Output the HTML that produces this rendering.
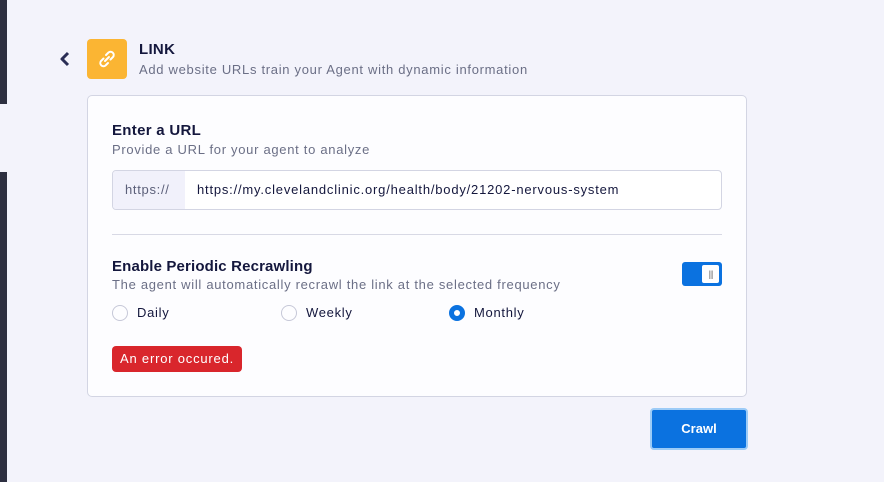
<!DOCTYPE html>
<html><head><style>
*{box-sizing:border-box;margin:0;padding:0}
body{width:884px;height:482px;background:#f3f3fb;font-family:"Liberation Sans",sans-serif;position:relative;overflow:hidden;color:#14173d}
.bar{position:absolute;left:0;width:7px;background:#2d2f40}
.abs{position:absolute}
.ls{letter-spacing:0.7px}
</style></head><body>
<div class="bar" style="top:0;height:104px"></div>
<div class="bar" style="top:172px;height:310px"></div>
<svg class="abs" style="left:59px;top:51px" width="12" height="16" viewBox="0 0 12 16"><path d="M9 2 L3 8 L9 14" stroke="#2a2d55" stroke-width="3" fill="none" stroke-linejoin="round"/></svg>
<div class="abs" style="left:87px;top:39px;width:40px;height:40px;background:#fbb533;border-radius:4px">
<svg width="40" height="40" viewBox="0 0 40 40"><g stroke="#fff" stroke-width="2" fill="none" stroke-linecap="round"><path d="M19 16 l2.5-2.5 a3.2 3.2 0 0 1 4.5 4.5 l-2.5 2.5"/><path d="M21 24 l-2.5 2.5 a3.2 3.2 0 0 1 -4.5 -4.5 l2.5 -2.5"/><path d="M18 22 l4 -4"/></g></svg></div>
<div class="abs" style="left:139px;top:41px;font-size:15px;font-weight:bold;letter-spacing:0.3px">LINK</div>
<div class="abs ls" style="left:139px;top:62px;font-size:13px;color:#6b6f86">Add website URLs train your Agent with dynamic information</div>
<div class="abs" style="left:87px;top:95px;width:660px;height:302px;background:#fdfdff;border:1px solid #d3d5e3;border-radius:5px"></div>
<div class="abs" style="left:112px;top:122px;font-size:15px;font-weight:bold;letter-spacing:0.3px">Enter a URL</div>
<div class="abs ls" style="left:112px;top:142px;font-size:13px;color:#6b6f86">Provide a URL for your agent to analyze</div>
<div class="abs" style="left:112px;top:170px;width:610px;height:40px;border:1px solid #d3d5e3;border-radius:4px;background:#fff;overflow:hidden">
<div class="abs ls" style="left:0;top:0;width:72px;height:38px;background:#f1f1fb;color:#5c607a;font-size:13px;line-height:38px;padding-left:12px">https://</div>
<div class="abs" style="left:84px;top:0;line-height:38px;font-size:13px;color:#14173d;letter-spacing:0.8px">https://my.clevelandclinic.org/health/body/21202-nervous-system</div></div>
<div class="abs" style="left:112px;top:234px;width:610px;height:1px;background:#d8d9e5"></div>
<div class="abs" style="left:112px;top:258px;font-size:15px;font-weight:bold;letter-spacing:0.15px">Enable Periodic Recrawling</div>
<div class="abs ls" style="left:112px;top:277px;font-size:13px;color:#6b6f86">The agent will automatically recrawl the link at the selected frequency</div>
<div class="abs" style="left:682px;top:262px;width:40px;height:24px;background:#0b72e0;border-radius:3px"><div class="abs" style="left:20px;top:3px;width:17px;height:18px;background:#fff;border-radius:2px;font-size:9px;color:#888;text-align:center;line-height:18px;letter-spacing:-1px">|||</div></div>
<div class="abs" style="left:112px;top:305px;width:16px;height:16px;border:1.5px solid #c6c8d8;border-radius:50%"></div>
<div class="abs ls" style="left:137px;top:305px;font-size:13px">Daily</div>
<div class="abs" style="left:281px;top:305px;width:16px;height:16px;border:1.5px solid #c6c8d8;border-radius:50%"></div>
<div class="abs ls" style="left:306px;top:305px;font-size:13px">Weekly</div>
<div class="abs" style="left:449px;top:305px;width:16px;height:16px;border:5px solid #0b72e0;border-radius:50%;background:#fff"></div>
<div class="abs ls" style="left:474px;top:305px;font-size:13px">Monthly</div>
<div class="abs" style="left:112px;top:346px;width:130px;height:26px;background:#d9262c;border-radius:4px;color:#fff;font-size:13px;line-height:26px;padding-left:8px;letter-spacing:0.8px">An error occured.</div>
<div class="abs" style="left:650px;top:408px;width:98px;height:42px;background:#0b72e0;border:2px solid #9ccbf7;border-radius:4px;color:#fff;font-size:13px;font-weight:bold;text-align:center;line-height:38px">Crawl</div>
</body></html>
